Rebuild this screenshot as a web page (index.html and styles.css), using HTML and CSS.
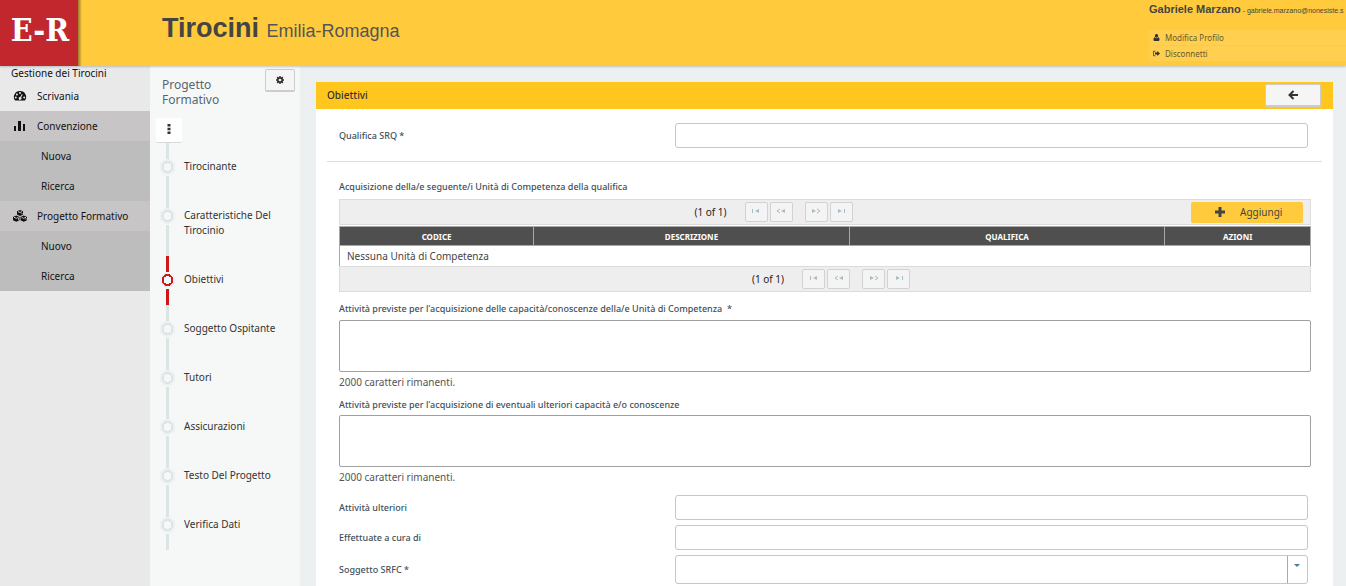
FILE: index.html
```html
<!DOCTYPE html>
<html lang="it">
<head>
<meta charset="utf-8">
<title>Tirocini Emilia-Romagna</title>
<link rel="stylesheet" href="styles.css">
</head>
<body>
<header class="topbar">
  <svg class="logo" viewBox="0 0 82 66" role="img" aria-label="E-R">
    <defs><linearGradient id="edge"><stop offset="0" stop-color="#7d6422"/><stop offset="1" stop-color="#ffcb3d"/></linearGradient></defs>
    <rect x="77" width="5" height="66" fill="url(#edge)"/>
    <rect width="78" height="66" fill="#c1272d"/>
    <text x="40" y="41" class="logo-text">E-R</text>
  </svg>
  <h1 class="brand">Tirocini <small>Emilia-Romagna</small></h1>
  <div class="user">
    <p class="user-name"><strong>Gabriele Marzano</strong> - <span>gabriele.marzano@nonesiste.s</span></p>
    <a class="user-link" href="#"><svg class="mini" viewBox="0 0 14 14"><path d="M7 0c2 0 3.300 1.500 3.300 3.600S9 7.500 7 7.500 3.700 5.700 3.700 3.600 5 0 7 0zM3.500 6.700C4.300 8 5.500 8.700 7 8.700s2.700-.7 3.500-2C12.400 7 13 9 13 11.500c0 1.500-1 2.500-2.300 2.500H3.300C2 14 1 13 1 11.500 1 9 1.600 7 3.500 6.700z"/></svg>Modifica Profilo</a>
    <a class="user-link" href="#"><svg class="mini" viewBox="0 0 14 14"><path d="M5 1.500v1.300H2.500c-.6 0-1 .4-1 1v6.400c0 .6.400 1 1 1H5v1.300H2.500A2.400 2.400 0 0 1 0 10.200V3.800a2.400 2.400 0 0 1 2.500-2.300zM8.500 2l5.500 5-5.500 5V9H4V5h4.500z"/></svg>Disconnetti</a>
  </div>
</header>
<div class="shell">
  <nav class="sidebar">
    <p class="side-title">Gestione dei Tirocini</p>
    <a class="side-item" href="#"><svg class="ico" viewBox="0 0 14 12"><path fill-rule="evenodd" d="M7 1a6 6 0 0 1 5 9.500H2A6 6 0 0 1 7 1zM7 2a1 1 0 1 0 0 2 1 1 0 0 0 0-2zM3.900 3.400a1 1 0 1 0 0 2 1 1 0 0 0 0-2zM2.800 6.400a1 1 0 1 0 0 2 1 1 0 0 0 0-2zM11.200 6.400a1 1 0 1 0 0 2 1 1 0 0 0 0-2zM8.900 4.100 7.200 7a1.400 1.400 0 1 0 .9.400l1.600-3z"/></svg>Scrivania</a>
    <a class="side-item group" href="#"><svg class="ico" viewBox="0 0 14 12"><path d="M1 6h2v5H1zM5 1h3v10H5zM10 4h2v7h-2z"/></svg>Convenzione</a>
    <a class="side-item sub" href="#">Nuova</a>
    <a class="side-item sub" href="#">Ricerca</a>
    <a class="side-item group" href="#"><svg class="ico" viewBox="0 0 14 12"><path d="m7 0 3 1.300v3.200L7 6 4 4.500V1.300zM3.300 5.500l3.200 1.400v3.300l-3.200 1.600L0 10.200V6.900zM10.700 5.500 14 6.900v3.300l-3.300 1.600-3.200-1.600V6.900z"/><path class="facet" d="m5 1.600 2 .9 2-.9M1 7.300l2.300 1 2.200-1M8.500 7.300l2.200 1 2.300-1M5.500 9.800V8.200M13 9.600V8.200M9 4V3"/></svg>Progetto Formativo</a>
    <a class="side-item sub" href="#">Nuovo</a>
    <a class="side-item sub" href="#">Ricerca</a>
  </nav>
  <aside class="steps">
    <div class="steps-head">
      <h2 class="steps-title">Progetto Formativo</h2>
      <button class="gear" aria-label="Impostazioni"><svg width="8" height="8" viewBox="0 0 14 14"><circle cx="7" cy="7" r="3.800" fill="none" stroke="currentColor" stroke-width="3"/><path d="M7 0v14M0 7h14M2 2l10 10M12 2 2 12" stroke="currentColor" stroke-width="2.600" fill="none"/><circle cx="7" cy="7" r="2.300" fill="#f5f5f5"/></svg></button>
    </div>
    <button class="dots" aria-label="Menu"><svg width="4" height="10" viewBox="0 0 4 10"><path d="M.5 0h3v2.500h-3zM.5 3.700h3v2.500h-3zM.5 7.400h3v2.500h-3z" fill="currentColor"/></svg></button>
    <ol class="step-list">
      <li class="step"><i class="mark"></i><a href="#">Tirocinante</a></li>
      <li class="step"><i class="mark"></i><a href="#">Caratteristiche Del Tirocinio</a></li>
      <li class="step current"><i class="mark"></i><a href="#">Obiettivi</a></li>
      <li class="step"><i class="mark"></i><a href="#">Soggetto Ospitante</a></li>
      <li class="step"><i class="mark"></i><a href="#">Tutori</a></li>
      <li class="step"><i class="mark"></i><a href="#">Assicurazioni</a></li>
      <li class="step"><i class="mark"></i><a href="#">Testo Del Progetto</a></li>
      <li class="step"><i class="mark"></i><a href="#">Verifica Dati</a></li>
    </ol>
  </aside>
  <main class="content">
    <section class="panel">
      <header class="panel-head">
        <h2 class="panel-title">Obiettivi</h2>
        <button class="back" aria-label="Indietro"><svg width="10" height="10" viewBox="0 0 10 10"><path d="M5.500 1 1.500 5l4 4M1.500 5H10" fill="none" stroke="currentColor" stroke-width="2"/></svg></button>
      </header>
      <form class="form">
        <div class="row first"><label for="srq">Qualifica SRQ *</label><input id="srq" class="field" type="text"></div>
        <div class="block">
          <p class="caption">Acquisizione della/e seguente/i Unità di Competenza della qualifica</p>
          <div class="bar top">
            <div class="pager"><span>(1 of 1)</span>
              <button type="button" class="pg" disabled aria-label="Prima"><svg width="8" height="6" viewBox="0 0 8 6"><path d="M0 1h1v4H0zM7 1v4L3 3z"/></svg></button>
              <button type="button" class="pg" disabled aria-label="Precedente"><svg width="10" height="6" viewBox="0 0 10 6"><path d="M9 1v4L5 3z"/><path d="M4 1 1 3l3 2" class="chev"/></svg></button>
              <button type="button" class="pg next" disabled aria-label="Successiva"><svg width="10" height="6" viewBox="0 0 10 6"><path d="M1 1v4l4-2z"/><path d="m6 1 3 2-3 2" class="chev"/></svg></button>
              <button type="button" class="pg" disabled aria-label="Ultima"><svg width="8" height="6" viewBox="0 0 8 6"><path d="M7 1h1v4H7zM1 1v4l4-2z"/></svg></button>
            </div>
            <button type="button" class="add"><svg width="12" height="12" viewBox="0 0 12 12"><path d="M4.500 1h3v3.500H11v3H7.500V11h-3V7.500H1v-3h3.500z" fill="currentColor"/></svg>Aggiungi</button>
          </div>
          <table class="grid">
            <colgroup><col class="c-code"><col class="c-mid"><col class="c-mid"><col class="c-act"></colgroup>
            <thead><tr><th>CODICE</th><th>DESCRIZIONE</th><th>QUALIFICA</th><th>AZIONI</th></tr></thead>
            <tbody><tr><td colspan="4">Nessuna Unità di Competenza</td></tr></tbody>
          </table>
          <div class="bar bottom">
            <div class="pager"><span>(1 of 1)</span>
              <button type="button" class="pg" disabled aria-label="Prima"><svg width="8" height="6" viewBox="0 0 8 6"><path d="M0 1h1v4H0zM7 1v4L3 3z"/></svg></button>
              <button type="button" class="pg" disabled aria-label="Precedente"><svg width="10" height="6" viewBox="0 0 10 6"><path d="M9 1v4L5 3z"/><path d="M4 1 1 3l3 2" class="chev"/></svg></button>
              <button type="button" class="pg next" disabled aria-label="Successiva"><svg width="10" height="6" viewBox="0 0 10 6"><path d="M1 1v4l4-2z"/><path d="m6 1 3 2-3 2" class="chev"/></svg></button>
              <button type="button" class="pg" disabled aria-label="Ultima"><svg width="8" height="6" viewBox="0 0 8 6"><path d="M7 1h1v4H7zM1 1v4l4-2z"/></svg></button>
            </div>
          </div>
          <label class="caption area-label" for="att1">Attività previste per l'acquisizione delle capacità/conoscenze della/e Unità di Competenza &nbsp;*</label>
          <textarea id="att1" class="area"></textarea>
          <p class="hint">2000 caratteri rimanenti.</p>
          <label class="caption area-label" for="att2">Attività previste per l'acquisizione di eventuali ulteriori capacità e/o conoscenze</label>
          <textarea id="att2" class="area"></textarea>
          <p class="hint">2000 caratteri rimanenti.</p>
        </div>
        <div class="row"><label for="ult">Attività ulteriori</label><input id="ult" class="field" type="text"></div>
        <div class="row"><label for="cura">Effettuate a cura di</label><input id="cura" class="field" type="text"></div>
        <div class="row"><label for="srfc">Soggetto SRFC *</label>
          <div class="combo"><select id="srfc" class="field"><option></option></select><span class="arrow"></span></div></div>
      </form>
    </section>
  </main>
</div>
</body>
</html>
```
FILE: styles.css
```css
* { box-sizing: border-box; }
html, body { height: 100%; }
body {
  margin: 0;
  display: flex;
  flex-direction: column;
  overflow: hidden;
  background: #ecf0f1;
  color: #222;
  font: 10px/15px "Noto Sans", "Open Sans", sans-serif;
}
h1, h2, p, ol { margin: 0; padding: 0; font-weight: normal; }
a { color: inherit; text-decoration: none; }
button, input, textarea, select { font: inherit; color: inherit; margin: 0; }

.topbar {
  flex: none;
  display: flex;
  height: 66px;
  background: #ffcb3d;
  box-shadow: 0 1px 2px rgba(0, 0, 0, .2);
  z-index: 1;
}
.logo { width: 82px; height: 66px; flex: none; }
.logo-text {
  font: bold 32px "DejaVu Serif Condensed", "DejaVu Serif", serif;
  fill: #fff;
  text-anchor: middle;
}
.brand {
  flex: 1;
  padding: 11px 0 0 80px;
  font: bold 27px/35px "Liberation Sans", Arial, sans-serif;
  color: #444;
  white-space: nowrap;
}
.brand small { font-size: 18px; font-weight: normal; color: #555; }
.user { width: 197px; flex: none; padding-top: 2px; color: #444; }
.user-name {
  font: 7px/14px "Liberation Sans", Arial, sans-serif;
  white-space: nowrap;
  margin-bottom: 12px;
}
.user-name strong { font-size: 11px; }
.user-link {
  display: flex;
  align-items: center;
  gap: 5px;
  height: 15px;
  margin-bottom: 1px;
  padding-left: 4px;
  background: #ffcf4f;
  color: #6b5a2a;
  font-size: 8px;
}
.mini { width: 7px; height: 7px; fill: #333; }

.shell { flex: 1; display: flex; min-height: 0; }
.sidebar { flex: none; width: 150px; background: #e9e9e9; color: #111; }
.side-title { padding-left: 11px; }
.side-item {
  display: flex;
  align-items: center;
  height: 30px;
  padding-left: 13px;
  white-space: nowrap;
}
.side-item.group { background: #c8c5c6; }
.side-item.sub { background: #bdbdbd; padding-left: 41px; }
.ico { width: 14px; height: 12px; margin-right: 10px; fill: #111; }
.facet { fill: none; stroke: #c8c5c6; stroke-width: 1; }

.steps { flex: none; width: 150px; padding: 2px 5px 0 6px; background: #f6f8f8; }
.steps-head { display: flex; justify-content: space-between; align-items: flex-start; }
.steps-title { padding: 9px 0 0 6px; font-size: 12px; color: #58666e; width: 90px; }
.gear, .dots, .back {
  display: grid;
  place-items: center;
  padding: 0;
  background: #f5f5f5;
  border: 1px solid #ccc;
  border-bottom-width: 2px;
  border-radius: 2px;
  color: #333;
}
.gear { width: 30px; height: 23px; margin-top: 1px; }
.dots {
  width: 26px;
  height: 25px;
  margin-top: 11px;
  padding-bottom: 2px;
  background: #fff;
  border: 0;
  border-bottom: 1px solid #d8d8d8;
}
.step-list { list-style: none; padding-left: 3px; }
.step {
  display: grid;
  grid-template-columns: 17px 1fr;
  column-gap: 8px;
}
.step a { padding: 16px 0 18px; color: #333; }
.mark {
  --tone: #dce4e5;
  display: flex;
  flex-direction: column;
  align-items: center;
  background: radial-gradient(circle 9px at 50% 24px, transparent 4px, var(--tone) 4px, var(--tone) 6px, #edf1f1 6px, #edf1f1 8px, transparent 8px);
}
.mark::before, .mark::after { content: ""; width: 3px; background: var(--tone); }
.mark::before { height: 16px; margin-bottom: 17px; }
.mark::after { flex: 1; }
.step.current .mark { --tone: #cf1717; }

.content { flex: 1; min-width: 0; padding: 16px 13px 0 16px; overflow: hidden; }
.panel { background: #fff; min-height: 100%; }
.panel-head {
  display: flex;
  justify-content: space-between;
  align-items: center;
  height: 27px;
  padding: 0 12px 0 11px;
  background: #ffc61e;
}
.panel-title { font-size: 10px; font-weight: 500; color: #333; }
.back { width: 56px; height: 23px; }
.form { padding: 0 11px; color: #3f4f58; }
.row {
  display: grid;
  grid-template-columns: 336px 1fr;
  padding: 0 14px 5px 12px;
  align-items: center;
}
.row label, .caption { font-size: 9px; font-weight: 500; }
.row.first { padding-top: 14px; padding-bottom: 13px; border-bottom: 1px solid #ddd; }
.field {
  display: block;
  width: 100%;
  height: 25px;
  border: 1px solid #c6c6c6;
  border-radius: 3px;
  background: #fff;
  padding: 2px 6px;
}
.combo { display: grid; }
.combo > * { grid-area: 1 / 1; }
.combo .field { appearance: none; height: 29px; }
.arrow {
  justify-self: end;
  width: 21px;
  border-left: 1px solid #aaa;
  margin: 1px 0;
  pointer-events: none;
}
.arrow::before {
  content: "";
  display: block;
  width: 0;
  margin: 8px 0 0 6px;
  border: 3px solid transparent;
  border-top-color: #4a7d96;
  border-bottom: 0;
}

.block { padding: 17px 11px 0 12px; margin-bottom: 10px; }
.caption { display: block; }
.block > p.caption { margin-bottom: 5px; }
.bar {
  display: flex;
  align-items: center;
  height: 26px;
  background: #eee;
  border: 1px solid #dcdcdc;
  color: #222;
}
.bar.top { padding: 0 7px 0 16px; }
.bar.bottom { padding-left: 12px; height: 25px; border-top: 0; }
.pager { flex: 1; display: flex; justify-content: center; gap: 2px; }
.pager span { line-height: 20px; margin-right: 16px; }
.pg {
  display: grid;
  place-items: center;
  width: 23px;
  height: 20px;
  padding: 0 0 2px;
  background: #f4f4f4;
  border: 1px solid #d2d2d2;
  border-radius: 2px;
}
.pg svg { fill: #a9bcc6; }
.pg .chev { fill: none; stroke: #a9bcc6; }
.pg.next { margin-left: 10px; }
.add {
  display: flex;
  align-items: center;
  gap: 14px;
  width: 112px;
  height: 21px;
  padding: 0 0 0 23px;
  border: 0;
  border-radius: 2px;
  background: #ffcb3d;
  color: #444;
}
.grid {
  width: 100%;
  margin-top: 1px;
  table-layout: fixed;
  border-collapse: collapse;
  border: 1px solid #a8a8a8;
  border-bottom-color: #dcdcdc;
}
.c-code { width: 20%; }
.c-mid { width: 32.5%; }
.c-act { width: 15%; }
.grid th {
  height: 19px;
  padding: 0;
  border: 1px solid #a8a8a8;
  background: #4f4f4f;
  color: #fff;
  font-size: 8px;
}
.grid td { height: 21px; padding: 0 7px; color: #444; }
.area-label { margin: 9px 0 4px; }
.area {
  display: block;
  width: 100%;
  height: 52px;
  resize: none;
  border: 1px solid #a0a0a0;
  border-radius: 2px;
  background: #fff;
}
.hint { margin-top: 3px; color: #555; }
.hint + .area-label { margin: 7px 0 3px; }
```
